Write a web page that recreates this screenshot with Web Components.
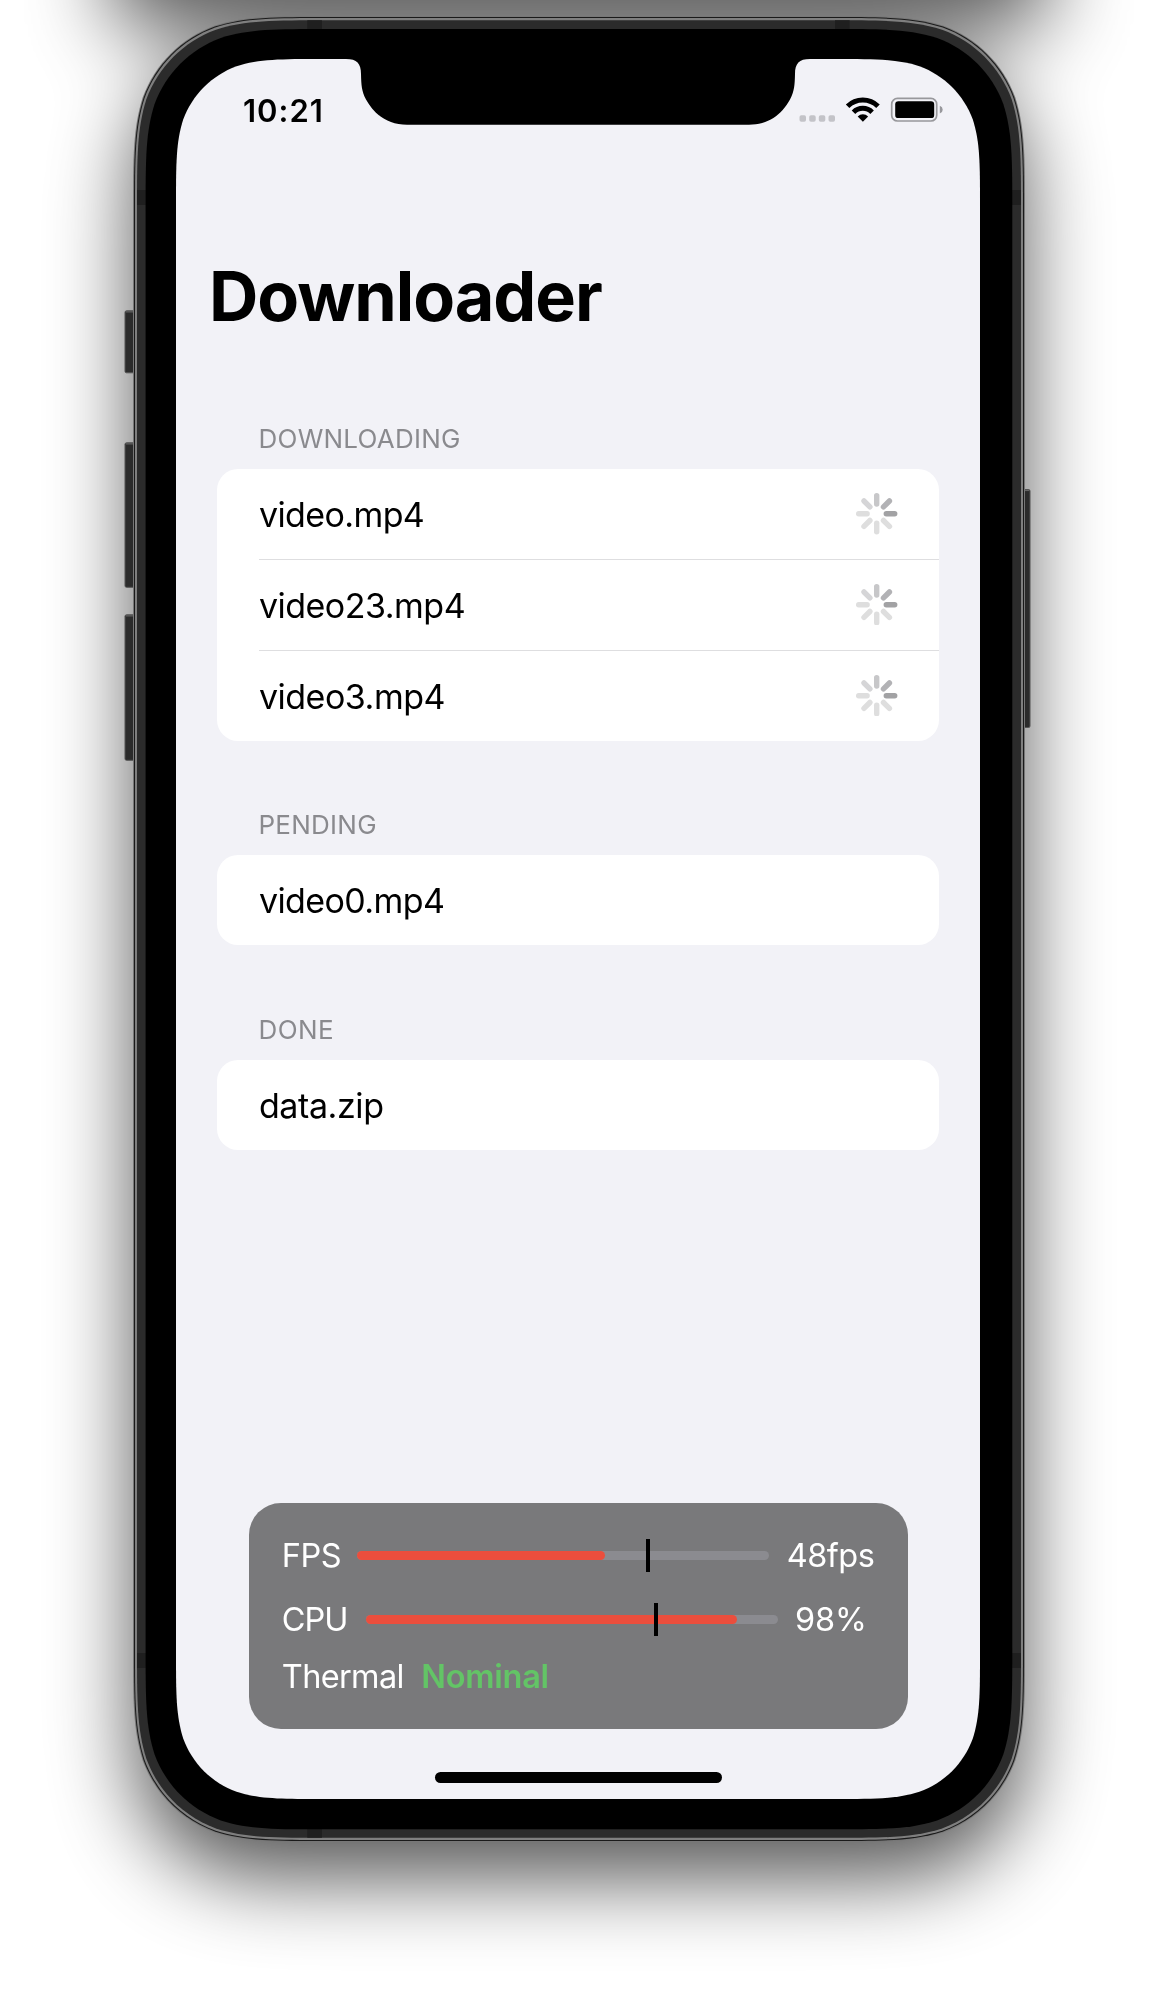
<!DOCTYPE html>
<html lang="en">
<head>
<meta charset="utf-8">
<title>Downloader</title>
<style>
html,body{margin:0;background:#fff;overflow:hidden}
body{width:1156px;height:1993px;font-family:Inter,"Liberation Sans",sans-serif;color:#000}
</style>
</head>
<body>
<phone-frame>
  <status-bar time="10:21"></status-bar>
  <large-title>Downloader</large-title>
  <list-section label="DOWNLOADING" track="0.25">
    <list-row track="-0.6">video.mp4<activity-spinner slot="accessory"></activity-spinner></list-row>
    <list-row track="-0.5" divided>video23.mp4<activity-spinner slot="accessory"></activity-spinner></list-row>
    <list-row track="-0.48" divided>video3.mp4<activity-spinner slot="accessory"></activity-spinner></list-row>
  </list-section>
  <list-section label="PENDING" track="0.25"><list-row track="-0.58">video0.mp4</list-row></list-section>
  <list-section label="DONE" track="0.4"><list-row track="-0.4">data.zip</list-row></list-section>
  <perf-panel>
    <perf-meter label="FPS" value="48fps" label-width="58.3" fill="247.5" tick="288.5" track="-0.5"></perf-meter>
    <perf-meter label="CPU" value="98%" label-width="66.5" fill="371.2" tick="288.5" track="-1" value-track="-0.13"></perf-meter>
    <perf-state label="Thermal">Nominal</perf-state>
  </perf-panel>
  <home-indicator></home-indicator>
</phone-frame>
<script>
const define = (name, render) => customElements.define(name, class extends HTMLElement {
  constructor() { super(); this.attachShadow({ mode: 'open' }); }
  connectedCallback() { this.shadowRoot.innerHTML = render(this); }
});
const attr = (el, name, fallback = '') => el.getAttribute(name) ?? fallback;

// Continuous-curvature rounded rectangle.
function squircle(x0, y0, x1, y1, r) {
  const a = 1.528665*r, b = 1.088493*r, c = .868407*r, d = .631494*r, e = .074911*r, f = .372824*r, g = .16906*r;
  return `M${x0+a} ${y0}H${x1-a}C${x1-b} ${y0} ${x1-c} ${y0} ${x1-d} ${y0+e}C${x1-f} ${y0+g} ${x1-g} ${y0+f} ${x1-e} ${y0+d}C${x1} ${y0+c} ${x1} ${y0+b} ${x1} ${y0+a}`
   + `V${y1-a}C${x1} ${y1-b} ${x1} ${y1-c} ${x1-e} ${y1-d}C${x1-g} ${y1-f} ${x1-f} ${y1-g} ${x1-d} ${y1-e}C${x1-c} ${y1} ${x1-b} ${y1} ${x1-a} ${y1}`
   + `H${x0+a}C${x0+b} ${y1} ${x0+c} ${y1} ${x0+d} ${y1-e}C${x0+f} ${y1-g} ${x0+g} ${y1-f} ${x0+e} ${y1-d}C${x0} ${y1-c} ${x0} ${y1-b} ${x0} ${y1-a}`
   + `V${y0+a}C${x0} ${y0+b} ${x0} ${y0+c} ${x0+e} ${y0+d}C${x0+g} ${y0+f} ${x0+f} ${y0+g} ${x0+d} ${y0+e}C${x0+c} ${y0} ${x0+b} ${y0} ${x0+a} ${y0}Z`;
}

define('phone-frame', () => {
  const button = (x, y, w, h) => `<rect x="${x+.5}" y="${y+.5}" width="${w}" height="${h-1}" rx="1.5" fill="#2b2b2b" stroke="#555" stroke-width="1"/><path d="M${x+1.5} ${y+1.6}h${w-2}" stroke="#6d6d6d"/>`;
  const body = squircle(134, 17, 1024, 1841, 128);
  return `<style>
    :host{display:grid;width:1156px;height:1993px}
    svg,main{grid-area:1/1}
    main{display:flex;flex-direction:column;box-sizing:border-box;width:804px;height:1740px;margin:59px 0 0 176px;padding:32.8px 0 16.5px}
  </style>
  <svg width="1156" height="1993" viewBox="0 0 1156 1993">
    <defs><filter id="blur" filterUnits="userSpaceOnUse" x="-200" y="-300" width="1560" height="2500"><feGaussianBlur stdDeviation="42"/></filter></defs>
    <g filter="url(#blur)" opacity=".67"><path d="${body}" transform="translate(0 37)"/><rect x="112" y="-260" width="934" height="287" rx="14"/></g>
    ${button(124.5,310.3,12,63)}${button(124.5,442.3,12,145.5)}${button(124.5,614.3,12,146.5)}${button(1020,489,9.5,239)}
    <path d="${squircle(133,16,1025,1842,129)}" fill="#777"/>
    <path d="${body}" fill="#1a1a1a"/>
    <path d="${squircle(135,18,1023,1840,127)}" fill="#7f7f7f"/>
    <path d="${squircle(137,20.3,1021,1837.8,125)}" fill="#2b2b2b"/>
    <path d="M307.3 20.3h14.6v9h-14.6zM835 20.3h14.6v9H835zM307.3 1829h14.6v8.8h-14.6zM137 190h9v15h-9zM1012 190h9v15h-9zM137 1653h9v15h-9zM1012 1653h9v15h-9z" fill="#1f1f1f"/>
    <path d="${squircle(145.6,29,1012.3,1829.3,119)}" fill="#000"/>
    <path d="${squircle(176,59,980,1799,96)}" fill="#f2f2f7"/>
    <path d="M346 58.5V59C357 59 361 63.5 361 74C361.3 85 361.5 91 366 99.5C374.5 115 388 124.7 407 124.7H749C768 124.7 781.5 115 790 99.5C794.5 91 794.7 85 795 74C795 63.5 799 59 810 59V58.5Z" fill="#000"/>
  </svg>
  <main><slot></slot></main>`;
});

define('status-bar', el => `<style>
    :host{display:flex;align-items:flex-start;justify-content:space-between;height:37.2px;padding:0 37.5px 0 67px}
    span{font:600 31px/38px Inter,sans-serif;letter-spacing:1px}
    svg{display:block;margin-top:4.2px}
  </style>
  <span>${attr(el,'time')}</span>
  <svg width="144" height="27" viewBox="798.5 96 144 27">
    <g fill="#c3c3c8"><rect x="799" y="115.2" width="6.5" height="6.5" rx="1.8"/><rect x="808.7" y="115.2" width="6.5" height="6.5" rx="1.8"/><rect x="818.3" y="115.2" width="6.5" height="6.5" rx="1.8"/><rect x="828" y="115.2" width="6.5" height="6.5" rx="1.8"/></g>
    <g fill="none" stroke="#000" stroke-width="5"><path d="M847.1 106.3A21.6 21.6 0 0 1 877.5 106.3"/><path d="M853 112.2A13.2 13.2 0 0 1 871.6 112.2"/></g>
    <path d="M862.4 121.8L857.2 116.5A7.4 7.4 0 0 1 867.6 116.5Z"/>
    <rect x="891.2" y="98.4" width="45" height="22.6" rx="5.8" fill="none" stroke="#98989c" stroke-width="1.7"/>
    <rect x="894.7" y="101.3" width="39" height="16.8" rx="3.2"/>
    <path d="M939.3 105.8Q942.2 107 942.2 109.7T939.3 113.6Z" fill="#98989c"/>
  </svg>`);

define('large-title', () => `<style>
    :host{display:block;margin:127px 0 0 33px;font:700 68.3px/80px Inter,sans-serif;letter-spacing:-1.03px}
  </style><slot></slot>`);

define('list-section', el => `<style>
    :host{display:block;margin:0 41px 0 41.3px;padding-bottom:68.6px}
    :host(:first-of-type){padding-top:87.1px}
    h2{margin:0 0 13.5px 41.2px;font:400 26px/32px Inter,sans-serif;color:#8a8a8e;letter-spacing:${attr(el,'track',0)}px}
    div{background:#fff;border-radius:21px}
  </style><h2>${attr(el,'label')}</h2><div><slot></slot></div>`);

define('list-row', el => `<style>
    :host{display:flex;align-items:center;justify-content:space-between;box-sizing:border-box;height:90.7px;margin-left:41.3px;padding:2.6px 41.2px 0 .3px;font-size:34px;line-height:44px}
    :host([divided]){background:linear-gradient(#dedee0,#dedee0) 0 0/100% 1.4px no-repeat}
    span{letter-spacing:${attr(el,'track',0)}px}
  </style><span><slot></slot></span><slot name="accessory"></slot>`);

define('activity-spinner', () => {
  const shades = ['#c7c7c9','#b2b2b5','#a2a2a4','#dedede','#dedede','#dedede','#dedede','#d5d5d7'];
  return `<style>:host{display:block;width:41.4px;height:41.4px;margin-bottom:2.4px}svg{display:block}</style>
  <svg width="41.4" height="41.4" viewBox="-20.7 -20.7 41.4 41.4">${shades.map((c,i)=>`<path d="M0 -9.6V-18" transform="rotate(${i*45})" stroke="${c}" stroke-width="5.4" stroke-linecap="round"/>`).join('')}</svg>`;
});

define('perf-panel', () => `<style>
    :host{display:flex;flex-direction:column;box-sizing:border-box;width:659px;height:225.8px;margin:auto 0 43.5px 72.8px;padding:32.8px 33px 0;background:#79797b;border-radius:32px;color:#fff;font-size:32.5px;line-height:40px}
  </style><slot></slot>`);

define('perf-meter', el => `<style>
    :host{display:flex;align-items:center;gap:17.3px;height:40px;margin-bottom:24.2px}
    span{padding-top:1.6px}
    .label{width:${attr(el,'label-width')}px;letter-spacing:${attr(el,'track',0)}px;white-space:nowrap}
    .value{letter-spacing:${attr(el,'value-track','-0.5')}px}
    .bar{position:relative;width:412px;height:8.6px;border-radius:5px;background:#8b8b90}
    .fill{width:${attr(el,'fill')}px;height:100%;border-radius:5px;background:#eb4e3d}
    .tick{position:absolute;left:${attr(el,'tick')}px;top:-12.3px;width:4.3px;height:33px;background:#000}
  </style>
  <span class="label">${attr(el,'label')}</span><div class="bar"><div class="fill"></div><div class="tick"></div></div><span class="value">${attr(el,'value')}</span>`);

define('perf-state', el => `<style>
    :host{display:flex;margin-top:-7px}
    .label{width:139.5px;letter-spacing:-.65px}
    b{font-weight:600;color:#63c466;letter-spacing:-.25px}
  </style><span class="label">${attr(el,'label')}</span><b><slot></slot></b>`);

define('home-indicator', () => `<style>:host{display:block;width:286.5px;height:10.5px;margin-left:259px;border-radius:6px;background:#000}</style>`);
</script>
</body>
</html>
